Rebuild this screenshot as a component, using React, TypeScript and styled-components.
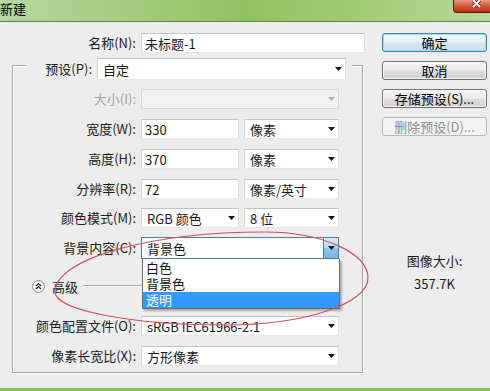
import styled, { createGlobalStyle } from "styled-components";

const GlobalStyle = createGlobalStyle`
  html, body {
    margin: 0;
    padding: 0;
    background: #ededed;
  }
  body {
    font-family: "Noto Sans CJK SC", "Microsoft YaHei", sans-serif;
    font-size: 13px;
    color: #1a1a1a;
  }
  * {
    box-sizing: border-box;
  }
`;

const Arrow = ({ color = "#111" }: { color?: string }) => (
  <svg width="7" height="4" viewBox="0 0 7 4">
    <polygon points="0,0 7,0 3.5,4" fill={color} />
  </svg>
);

const Select = ({ w, h, disabled, open, children }: SelectProps) => (
  <SelectBox $w={w} $h={h} $disabled={disabled} $open={open}>
    <SelectText>{children}</SelectText>
    {open ? (
      <DropButton>
        <Arrow />
      </DropButton>
    ) : (
      <ArrowSlot>
        <Arrow color={disabled ? "#b0b0b0" : "#111"} />
      </ArrowSlot>
    )}
    {open && (
      <DropList>
        <DropItem>白色</DropItem>
        <DropItem>背景色</DropItem>
        <DropItem $active>透明</DropItem>
      </DropList>
    )}
  </SelectBox>
);

const App = () => {
  return (
    <>
      <GlobalStyle />
      <Window>
        <TitleBar>
          <TitleText>新建</TitleText>
          <CloseButton>
            <svg width="11" height="8" viewBox="0 0 11 8">
              <path d="M2 0 L9 7 M9 0 L2 7" stroke="#6a1d10" strokeWidth="3.4" />
              <path d="M2 0 L9 7 M9 0 L2 7" stroke="#fff" strokeWidth="2" />
            </svg>
          </CloseButton>
        </TitleBar>

        <Body>
          <LeftPane>
            <Row>
              <Label $w={136}>名称(N):</Label>
              <Input $w={224}>未标题-1</Input>
            </Row>

            <Group>
              <PresetRow>
                <Label $w={66}>预设(P):</Label>
                <Select w={249} h={22}>
                  自定
                </Select>
              </PresetRow>

              <Row $mt={9}>
                <Label $w={123} $disabled>
                  大小(I):
                </Label>
                <Select w={198} disabled>
                  {""}
                </Select>
              </Row>

              <Row $mt={10}>
                <Label $w={123}>宽度(W):</Label>
                <Input $w={98}>330</Input>
                <Select w={95}>像素</Select>
              </Row>

              <Row $mt={10}>
                <Label $w={123}>高度(H):</Label>
                <Input $w={98}>370</Input>
                <Select w={95}>像素</Select>
              </Row>

              <Row $mt={10}>
                <Label $w={123}>分辨率(R):</Label>
                <Input $w={98}>72</Input>
                <Select w={95}>像素/英寸</Select>
              </Row>

              <Row $mt={9}>
                <Label $w={123}>颜色模式(M):</Label>
                <Select w={98}>RGB 颜色</Select>
                <Select w={95}>8 位</Select>
              </Row>

              <Row $mt={9}>
                <Label $w={123}>背景内容(C):</Label>
                <Select w={198} h={22} open>
                  背景色
                </Select>
              </Row>

              <AdvancedRow>
                <Toggle>
                  <svg width="13" height="13" viewBox="0 0 13 13">
                    <circle cx="6.5" cy="6.5" r="6" fill="#fafafa" stroke="#8a8a8a" />
                    <polyline points="4,6 6.5,3.6 9,6" fill="none" stroke="#222" strokeWidth="1.3" />
                    <polyline points="4,9 6.5,6.6 9,9" fill="none" stroke="#222" strokeWidth="1.3" />
                  </svg>
                </Toggle>
                <span>高级</span>
                <Rule />
              </AdvancedRow>

              <Row $mt={22}>
                <Label $w={123}>颜色配置文件(O):</Label>
                <Select w={198}>sRGB IEC61966-2.1</Select>
              </Row>

              <Row $mt={10}>
                <Label $w={123}>像素长宽比(X):</Label>
                <Select w={198}>方形像素</Select>
              </Row>
            </Group>
          </LeftPane>

          <RightPane>
            <Button $default>确定</Button>
            <Button>取消</Button>
            <Button>存储预设(S)...</Button>
            <Button $disabled>删除预设(D)...</Button>
            <ImageSize>
              <div>图像大小:</div>
              <SizeValue>357.7K</SizeValue>
            </ImageSize>
          </RightPane>
        </Body>

        <Annotation width="490" height="391" viewBox="0 0 490 391">
          <path
            d="M55 292 C55 259, 149 232, 265 232 C322 232, 368 253, 368 278 C368 304, 304 325, 225 325 C131 325, 55 310, 55 292 Z"
            fill="none"
            stroke="#d4505e"
            strokeWidth="1.2"
          />
        </Annotation>
      </Window>
    </>
  );
};

const Window = styled.div`
  position: relative;
  width: 490px;
  height: 391px;
  display: flex;
  flex-direction: column;
  overflow: hidden;
  background: #ededed;
  border-bottom: 3px solid #8cbf66;
`;

const TitleBar = styled.div`
  height: 22px;
  flex-shrink: 0;
  display: flex;
  justify-content: space-between;
  align-items: flex-start;
  background: linear-gradient(
    90deg,
    #b7d6a2 0%,
    #a5cd82 25%,
    #91c262 50%,
    #a3cd78 75%,
    #b7d99a 100%
  );
  border-bottom: 1px solid #5f8646;
`;

const TitleText = styled.div`
  padding-top: 1px;
  font-size: 13px;
  line-height: 16px;
  color: #000;
`;

const CloseButton = styled.div`
  width: 43px;
  height: 13px;
  margin-right: -6px;
  display: flex;
  justify-content: center;
  padding-left: 4px;
  border: 1px solid #5e1c10;
  border-top: none;
  border-radius: 0 0 4px 4px;
  background: linear-gradient(#e89a80, #cf5a3a 50%, #b5300f);
`;

const Body = styled.div`
  flex: 1;
  display: flex;
`;

const LeftPane = styled.div`
  width: 382px;
  padding-top: 11px;
  display: flex;
  flex-direction: column;
`;

const Row = styled.div<{ $mt?: number }>`
  display: flex;
  align-items: center;
  gap: 5px;
  margin-top: ${(p) => p.$mt ?? 0}px;
`;

const Label = styled.div<{ $w: number; $disabled?: boolean }>`
  width: ${(p) => p.$w}px;
  flex-shrink: 0;
  text-align: right;
  white-space: nowrap;
  line-height: 16px;
  color: ${(p) => (p.$disabled ? "#a2a2a2" : "#1a1a1a")};
`;

const Input = styled.div<{ $w: number }>`
  width: ${(p) => p.$w}px;
  height: 20px;
  padding: 0 3px;
  display: flex;
  align-items: center;
  background: #fff;
  border: 1px solid;
  border-color: #c4c4c4 #e0e0e0 #e8e8e8 #d8d8d8;
  white-space: nowrap;
`;

const SelectBox = styled.div<{
  $w: number;
  $h?: number;
  $disabled?: boolean;
  $open?: boolean;
}>`
  position: relative;
  width: ${(p) => p.$w}px;
  height: ${(p) => p.$h ?? 20}px;
  display: flex;
  align-items: center;
  padding-left: 5px;
  background: ${(p) => (p.$disabled ? "#f2f2f2" : "#fff")};
  border: 1px solid;
  border-color: ${(p) =>
    p.$open ? "#58799a" : p.$disabled ? "#d8d8d8" : "#c4c4c4 #e0e0e0 #e8e8e8 #d8d8d8"};
  white-space: nowrap;
`;

const SelectText = styled.div`
  flex: 1;
`;

const ArrowSlot = styled.div`
  display: flex;
  padding-right: 3px;
`;

const DropButton = styled.div`
  width: 15px;
  align-self: stretch;
  display: flex;
  align-items: center;
  justify-content: center;
  border-left: 1px solid #3c7fb1;
  background: linear-gradient(#d9eefb, #b4dcf6 50%, #8fc5ec 51%, #79b4e2);
`;

const DropList = styled.div`
  position: absolute;
  top: calc(100% + 1px);
  left: 0;
  width: 198px;
  z-index: 2;
  padding: 1px 0 0;
  background: #fff;
  border: 1px solid #6b6b6b;
  border-top: none;
  box-shadow: 2px 2px 2px rgba(0, 0, 0, 0.28);
`;

const DropItem = styled.div<{ $active?: boolean }>`
  height: 16px;
  line-height: 16px;
  padding-left: 3px;
  background: ${(p) => (p.$active ? "#3399ff" : "transparent")};
  color: ${(p) => (p.$active ? "#fff" : "#111")};
`;

const Group = styled.div`
  margin: 12px 0 0 12px;
  width: 351px;
  padding-bottom: 6px;
  display: flex;
  flex-direction: column;
  border: 1px solid #a7a7a7;
  box-shadow: inset 1px 1px 0 #fff, 1px 1px 0 #fff;
`;

const PresetRow = styled.div`
  align-self: flex-start;
  display: flex;
  align-items: center;
  gap: 5px;
  margin: -8px 0 0 13px;
  padding-right: 6px;
  background: #ededed;
`;

const AdvancedRow = styled.div`
  display: flex;
  align-items: center;
  height: 16px;
  margin: 19px 24px 0 19px;
`;

const Toggle = styled.div`
  display: flex;
  margin-right: 7px;
`;

const Rule = styled.div`
  flex: 1;
  margin-left: 5px;
  border-top: 1px solid #a7a7a7;
  border-bottom: 1px solid #fff;
`;

const RightPane = styled.div`
  width: 105px;
  padding-top: 11px;
  display: flex;
  flex-direction: column;
  gap: 9px;
`;

const Button = styled.div<{ $default?: boolean; $disabled?: boolean }>`
  height: 19px;
  display: flex;
  align-items: center;
  justify-content: center;
  border: 1px solid
    ${(p) => (p.$default ? "#3c7fb1" : p.$disabled ? "#b5b9bc" : "#707070")};
  border-radius: 3px;
  background: ${(p) =>
    p.$disabled
      ? "#f4f4f4"
      : p.$default
      ? "linear-gradient(#f4f9fc 0%, #e9f2f8 48%, #d7e6f0 52%, #c9dce9 100%)"
      : "linear-gradient(#f4f4f4 0%, #ececec 48%, #dedede 52%, #d2d2d2 100%)"};
  box-shadow: inset 0 0 0 1px
    ${(p) => (p.$default ? "#a6dcf7" : p.$disabled ? "transparent" : "rgba(255,255,255,0.75)")};
  color: ${(p) => (p.$disabled ? "#8d8d8d" : "#000")};
  line-height: 17px;
  white-space: nowrap;
`;

const ImageSize = styled.div`
  margin-top: 107px;
  text-align: center;
  line-height: 17px;
  color: #1a1a1a;
`;

const SizeValue = styled.div`
  margin-top: 6px;
`;

const Annotation = styled.svg`
  position: absolute;
  top: 0;
  left: 0;
  pointer-events: none;
  z-index: 5;
`;

interface SelectProps {
  w: number;
  h?: number;
  disabled?: boolean;
  open?: boolean;
  children: React.ReactNode;
}

export default App;
